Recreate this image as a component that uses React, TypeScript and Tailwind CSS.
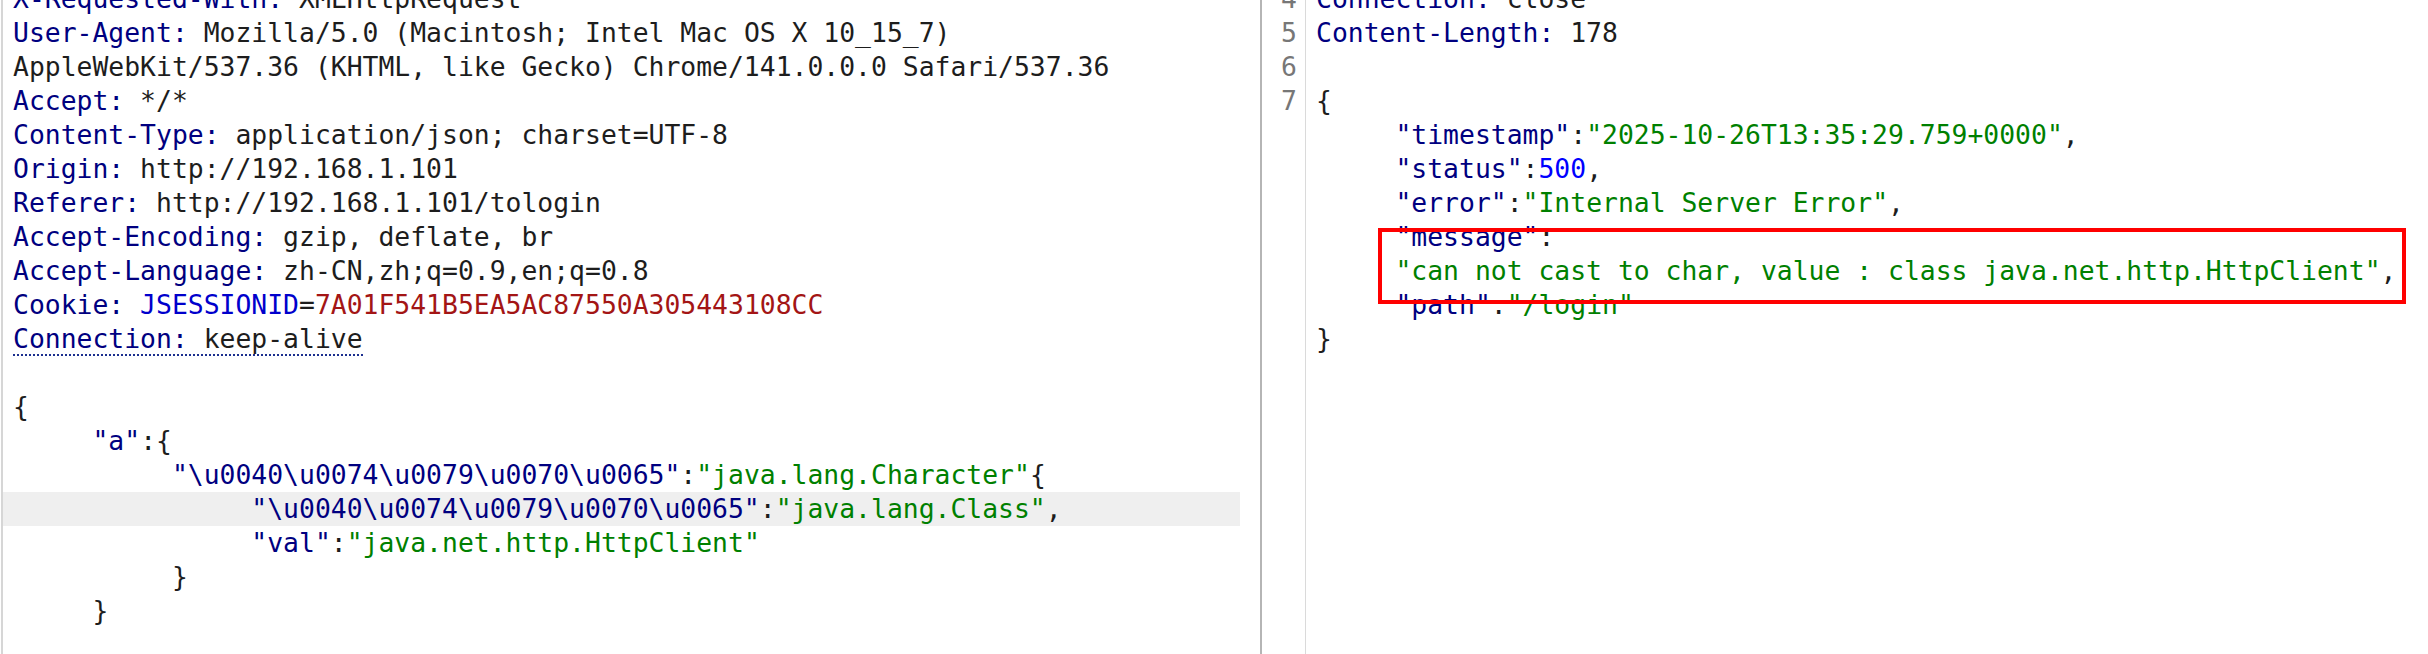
import React from 'react';

type Seg = [string, keyof typeof tone];
type Line = { segs: Seg[]; hl?: boolean; dotted?: boolean; num?: string };

const tone = {
  k: 'text-[#000080]',
  v: 'text-[#1d1d1d]',
  s: 'text-[#008000]',
  n: 'text-[#0000ff]',
  id: 'text-[#0000cc]',
  r: 'text-[#a31515]',
};

const I1 = '     ';
const I2 = I1 + I1;
const I3 = I2 + I1;
const U = '"\\u0040\\u0074\\u0079\\u0070\\u0065"';

const request: Line[] = [
  { segs: [['X-Requested-With: ', 'k'], ['XMLHttpRequest', 'v']] },
  { segs: [['User-Agent: ', 'k'], ['Mozilla/5.0 (Macintosh; Intel Mac OS X 10_15_7)', 'v']] },
  { segs: [['AppleWebKit/537.36 (KHTML, like Gecko) Chrome/141.0.0.0 Safari/537.36', 'v']] },
  { segs: [['Accept: ', 'k'], ['*/*', 'v']] },
  { segs: [['Content-Type: ', 'k'], ['application/json; charset=UTF-8', 'v']] },
  { segs: [['Origin: ', 'k'], ['http://192.168.1.101', 'v']] },
  { segs: [['Referer: ', 'k'], ['http://192.168.1.101/tologin', 'v']] },
  { segs: [['Accept-Encoding: ', 'k'], ['gzip, deflate, br', 'v']] },
  { segs: [['Accept-Language: ', 'k'], ['zh-CN,zh;q=0.9,en;q=0.8', 'v']] },
  { segs: [['Cookie: ', 'k'], ['JSESSIONID', 'id'], ['=', 'v'], ['7A01F541B5EA5AC87550A305443108CC', 'r']] },
  { segs: [['Connection: ', 'k'], ['keep-alive', 'v']], dotted: true },
  { segs: [] },
  { segs: [['{', 'v']] },
  { segs: [[I1, 'v'], ['"a"', 'k'], [':{', 'v']] },
  { segs: [[I2, 'v'], [U, 'k'], [':', 'v'], ['"java.lang.Character"', 's'], ['{', 'v']] },
  { segs: [[I3, 'v'], [U, 'k'], [':', 'v'], ['"java.lang.Class"', 's'], [',', 'v']], hl: true },
  { segs: [[I3, 'v'], ['"val"', 'k'], [':', 'v'], ['"java.net.http.HttpClient"', 's']] },
  { segs: [[I2, 'v'], ['}', 'v']] },
  { segs: [[I1, 'v'], ['}', 'v']] },
];

const response: Line[] = [
  { num: '4', segs: [['Connection: ', 'k'], ['close', 'v']] },
  { num: '5', segs: [['Content-Length: ', 'k'], ['178', 'v']] },
  { num: '6', segs: [] },
  { num: '7', segs: [['{', 'v']] },
  { segs: [[I1, 'v'], ['"timestamp"', 'k'], [':', 'v'], ['"2025-10-26T13:35:29.759+0000"', 's'], [',', 'v']] },
  { segs: [[I1, 'v'], ['"status"', 'k'], [':', 'v'], ['500', 'n'], [',', 'v']] },
  { segs: [[I1, 'v'], ['"error"', 'k'], [':', 'v'], ['"Internal Server Error"', 's'], [',', 'v']] },
  { segs: [[I1, 'v'], ['"message"', 'k'], [':', 'v']] },
  { segs: [[I1, 'v'], ['"can not cast to char, value : class java.net.http.HttpClient"', 's'], [',', 'v']] },
  { segs: [[I1, 'v'], ['"path"', 'k'], [':', 'v'], ['"/login"', 's']] },
  { segs: [['}', 'v']] },
];

function Row({ line }: { line: Line }) {
  return (
    <div className={`h-[34px] whitespace-pre pl-[10px] ${line.hl ? 'bg-[#efefef]' : ''}`}>
      <span className={line.dotted ? 'border-b-2 border-dotted border-[#1c2f8f]' : ''}>
        {line.segs.map(([t, c], i) => (
          <span key={i} className={tone[c]}>
            {t}
          </span>
        ))}
      </span>
    </div>
  );
}

export default function App() {
  return (
    <div
      className="flex w-[2428px] h-[654px] overflow-hidden bg-white text-[26.4px] leading-[34px]"
      style={{ fontFamily: '"DejaVu Sans Mono", "Liberation Mono", monospace' }}
    >
      {/* request editor */}
      <div className="ml-px w-[1259px] shrink-0 border-l-2 border-[#d6d6d6]">
        <div className="w-[1237px] -mt-[18px]">
          {request.map((l, i) => (
            <Row key={i} line={l} />
          ))}
        </div>
      </div>

      {/* response editor */}
      <div className="relative flex flex-1 border-l-2 border-[#b5b5b5]">
        <div className="w-[44px] shrink-0 border-r border-[#dadada]">
          <div className="-mt-[18px] pr-[8px] text-right text-[#777]">
            {response.map((l, i) => (
              <div key={i} className="h-[34px]">{l.num ?? ''}</div>
            ))}
          </div>
        </div>
        <div className="flex-1 -mt-[18px]">
          {response.map((l, i) => (
            <Row key={i} line={l} />
          ))}
        </div>

        <div className="absolute left-[116px] top-[228px] w-[1028px] h-[76px] border-4 border-[#ff0000]" />
      </div>
    </div>
  );
}
